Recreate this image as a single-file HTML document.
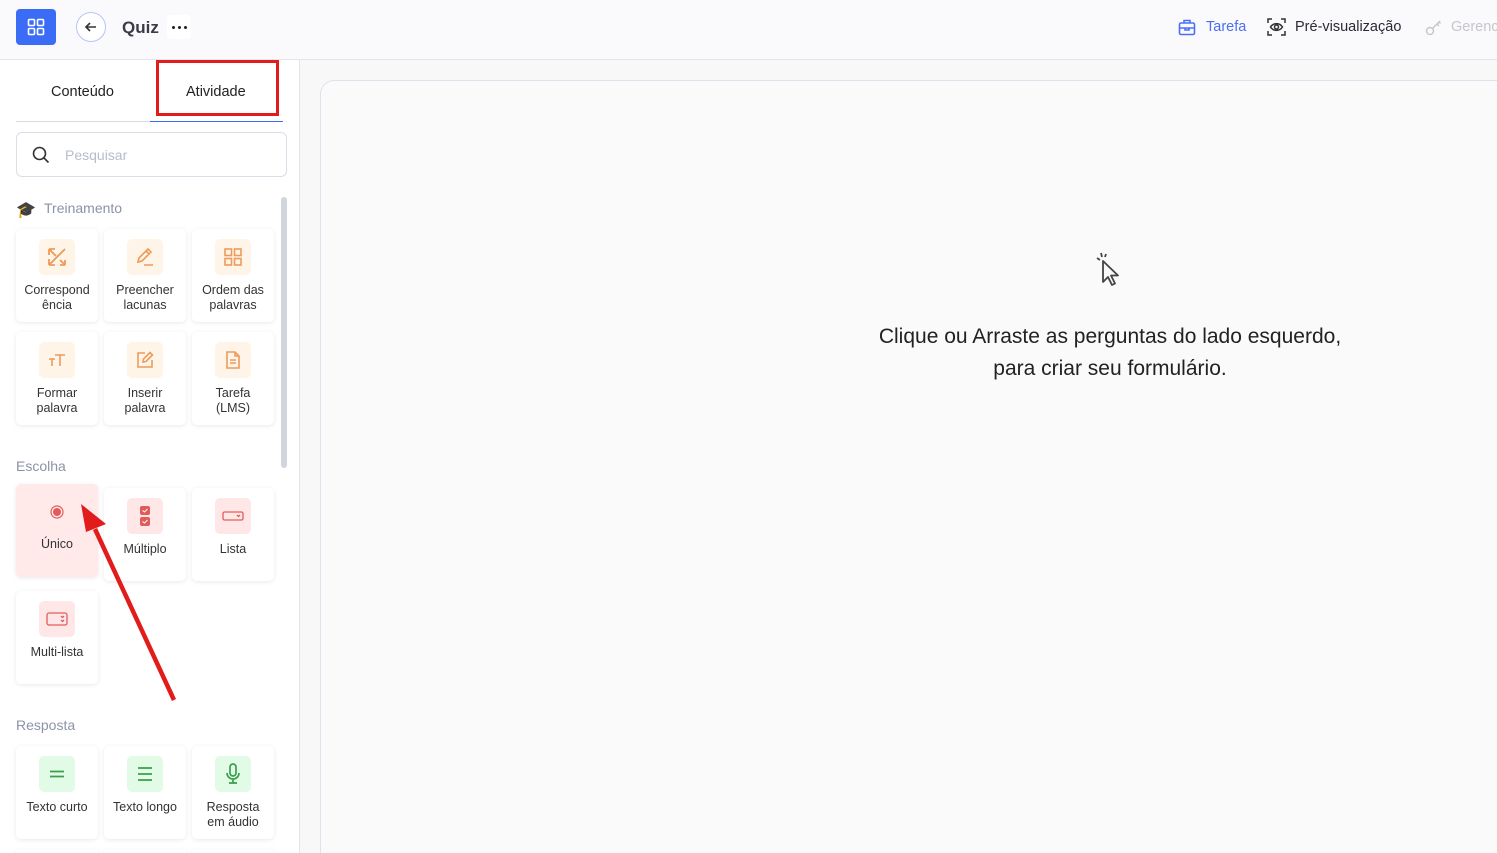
<!DOCTYPE html>
<html style="width:1497px;height:853px;overflow:hidden"><head><meta charset="utf-8"><style>
*{box-sizing:border-box;margin:0;padding:0}
body{width:1497px;height:853px;overflow:hidden;font-family:"Liberation Sans",sans-serif;background:#f8f8f9;position:relative;color:#333}
.hdr{position:absolute;left:0;top:0;width:1497px;height:60px;background:#fafafd;border-bottom:1px solid #e4e3ee}
.side{position:absolute;left:0;top:60px;width:300px;height:793px;background:#fff;border-right:1px solid #e4e3ee}
.panel{position:absolute;left:320px;top:80px;width:1177px;height:773px;background:#fafafa;border:1px solid #e2e0ec;border-right:none;border-bottom:none;border-radius:14px 0 0 0}
.abs{position:absolute}
.card{position:absolute;width:82px;height:93px;background:#fff;border-radius:5px;box-shadow:0 1px 4px rgba(30,40,80,.10);text-align:center;font-size:12.5px;color:#333;line-height:15px}
.ib{width:36px;height:36px;border-radius:5px;margin:10px auto 0;display:flex;align-items:center;justify-content:center}
.o{background:#fff4e8}.r{background:#ffe7e7}.g{background:#e2fbe6}
.lbl{margin-top:8px}
.sec{position:absolute;left:16px;font-size:14px;color:#8b93a6}
</style></head><body>
<div class="hdr">
 <div class="abs" style="left:16px;top:9px;width:40px;height:36px;background:#3b6cf6;border-radius:4px;display:flex;align-items:center;justify-content:center">
  <svg width="18" height="18" viewBox="0 0 18 18" fill="none" stroke="#fff" stroke-width="1.6"><rect x="1.5" y="1.5" width="6" height="6" rx="1"/><rect x="10.5" y="1.5" width="6" height="6" rx="1"/><rect x="1.5" y="10.5" width="6" height="6" rx="1"/><rect x="10.5" y="10.5" width="6" height="6" rx="1"/></svg></div>
 <div class="abs" style="left:76px;top:12px;width:30px;height:30px;border:1px solid #b8c4f4;border-radius:50%;background:#fff;display:flex;align-items:center;justify-content:center">
  <svg width="14" height="14" viewBox="0 0 14 14" fill="none" stroke="#333" stroke-width="1.6"><path d="M12 7H2M6 3L2 7l4 4"/></svg></div>
 <div class="abs" style="left:122px;top:18px;font-size:17px;font-weight:bold;color:#3a3a48">Quiz</div>
 <div class="abs" style="left:167px;top:15px;width:24px;height:24px;background:#fff;border-radius:4px;display:flex;align-items:center;justify-content:center;gap:3px">
  <i style="width:3px;height:3px;background:#222;border-radius:50%"></i><i style="width:3px;height:3px;background:#222;border-radius:50%"></i><i style="width:3px;height:3px;background:#222;border-radius:50%"></i></div>
 <svg class="abs" style="left:1178px;top:19px" width="18" height="17" viewBox="0 0 18 17" fill="none" stroke="#4b6ef5" stroke-width="1.6"><rect x="1.5" y="4" width="15" height="11.5" rx="1.5"/><path d="M6 4V1.5h6V4M1.5 9h15M7 9v2h4V9"/></svg>
 <div class="abs" style="left:1206px;top:19px;font-size:14.5px;color:#4b6ef5">Tarefa</div>
 <svg class="abs" style="left:1267px;top:18px" width="19" height="18" viewBox="0 0 19 18" fill="none" stroke="#333" stroke-width="1.5"><path d="M1 5V1h4M14 1h4v4M18 13v4h-4M5 17H1v-4"/><path d="M3.5 9c3-4.5 9-4.5 12 0c-3 4.5-9 4.5-12 0z"/><circle cx="9.5" cy="9" r="2"/></svg>
 <div class="abs" style="left:1295px;top:19px;font-size:14.5px;color:#2a2a33">Pré-visualização</div>
 <svg class="abs" style="left:1425px;top:19px" width="17" height="17" viewBox="0 0 17 17" fill="none" stroke="#c6c6cc" stroke-width="1.5"><circle cx="5" cy="12" r="3.5"/><path d="M7.5 9.5L15 2M12 5l2 2M14 3l1.5 1.5"/></svg>
 <div class="abs" style="left:1451px;top:19px;font-size:14.5px;color:#c6c6cc;white-space:nowrap">Gerenciar</div>
</div>

<div class="side">
 <div class="abs" style="left:51px;top:24px;font-size:14.5px;color:#222">Conteúdo</div>
 <div class="abs" style="left:186px;top:24px;font-size:14.5px;color:#222">Atividade</div>
 <div class="abs" style="left:16px;top:61px;width:134px;height:1px;background:#d8d8e0"></div>
 <div class="abs" style="left:150px;top:61px;width:133px;height:1px;background:#3b6cf6"></div>
 <div class="abs" style="left:16px;top:72px;width:271px;height:45px;border:1px solid #dcdde6;border-radius:6px">
  <svg class="abs" style="left:15px;top:13px" width="18" height="18" viewBox="0 0 18 18" fill="none" stroke="#333" stroke-width="1.6"><circle cx="7.5" cy="7.5" r="6"/><path d="M12 12l4.5 4.5"/></svg>
  <div class="abs" style="left:48px;top:14px;font-size:14px;color:#b8bccb">Pesquisar</div>
 </div>
 <div class="abs" style="left:281px;top:137px;width:6px;height:271px;background:#d0d5de;border-radius:3px"></div>
</div>

<div class="abs" style="left:16px;top:200px;font-size:16px">🎓</div>
<div class="sec" style="left:44px;top:200px">Treinamento</div>

<div class="card" style="left:16px;top:229px"><div class="ib o"><svg width="22" height="22" viewBox="0 0 22 22" fill="none" stroke="#ee9a5a" stroke-width="1.8"><path d="M3 3l7 7M3 3v6M3 3h6M19 3L3 19M3 19v-6M3 19h6M14 14l5 5M19 19v-5M19 19h-5"/></svg></div><div class="lbl">Correspond<br>ência</div></div>
<div class="card" style="left:104px;top:229px"><div class="ib o"><svg width="20" height="20" viewBox="0 0 20 20" fill="none" stroke="#ee9a5a" stroke-width="1.6"><path d="M3 15l1-4L13 2l3 3-9 9-4 1zM11 4l3 3M9 18h9"/></svg></div><div class="lbl">Preencher<br>lacunas</div></div>
<div class="card" style="left:192px;top:229px"><div class="ib o"><svg width="20" height="20" viewBox="0 0 20 20" fill="none" stroke="#ee9a5a" stroke-width="1.6"><rect x="2" y="2" width="6.5" height="6.5"/><rect x="11.5" y="2" width="6.5" height="6.5"/><rect x="2" y="11.5" width="6.5" height="6.5"/><rect x="11.5" y="11.5" width="6.5" height="6.5"/></svg></div><div class="lbl">Ordem das<br>palavras</div></div>

<div class="card" style="left:16px;top:332px"><div class="ib o"><svg width="20" height="20" viewBox="0 0 20 20" fill="none" stroke="#ee9a5a" stroke-width="1.6"><path d="M8 5h10M13 5v11M2 9h6M5 9v7"/></svg></div><div class="lbl">Formar<br>palavra</div></div>
<div class="card" style="left:104px;top:332px"><div class="ib o"><svg width="20" height="20" viewBox="0 0 20 20" fill="none" stroke="#ee9a5a" stroke-width="1.6"><path d="M10 3H3v14h14v-7"/><path d="M8 12l.5-3L15 2.5l2.5 2.5L11 11.5z"/></svg></div><div class="lbl">Inserir<br>palavra</div></div>
<div class="card" style="left:192px;top:332px"><div class="ib o"><svg width="20" height="20" viewBox="0 0 20 20" fill="none" stroke="#ee9a5a" stroke-width="1.6"><path d="M4 2h8l4 4v12H4zM12 2v4h4M7 10h6M7 13h6"/></svg></div><div class="lbl">Tarefa<br>(LMS)</div></div>

<div class="sec" style="top:458px">Escolha</div>
<div class="card" style="left:16px;top:484px;background:#ffe9e9"><div class="ib"><svg width="16" height="16" viewBox="0 0 16 16"><circle cx="8" cy="8" r="6" fill="none" stroke="#e25b5b" stroke-width="1.2"/><circle cx="8" cy="8" r="4" fill="#e25b5b"/></svg></div><div style="margin-top:7px">Único</div></div>
<div class="card" style="left:104px;top:488px"><div class="ib r"><svg width="12" height="22" viewBox="0 0 12 22"><rect x="1" y="1" width="10" height="9" rx="2" fill="#e25b5b"/><rect x="1" y="12" width="10" height="9" rx="2" fill="#e25b5b"/><path d="M3.5 5.5l2 1.5 3-3M3.5 16.5l2 1.5 3-3" stroke="#fff" fill="none" stroke-width="1"/></svg></div><div class="lbl">Múltiplo</div></div>
<div class="card" style="left:192px;top:488px"><div class="ib r"><svg width="22" height="12" viewBox="0 0 22 12" fill="none" stroke="#e25b5b" stroke-width="1.3"><rect x="1" y="2" width="20" height="8" rx="1.5"/><path d="M15 5l1.5 1.5L18 5"/></svg></div><div class="lbl">Lista</div></div>
<div class="card" style="left:16px;top:591px"><div class="ib r"><svg width="22" height="16" viewBox="0 0 22 16" fill="none" stroke="#e25b5b" stroke-width="1.3"><rect x="1" y="2" width="20" height="12" rx="2"/><path d="M15 5l1.5 1.5L18 5M15 9l1.5 1.5L18 9"/></svg></div><div class="lbl">Multi-lista</div></div>

<div class="sec" style="top:717px">Resposta</div>
<div class="card" style="left:16px;top:746px"><div class="ib g"><svg width="18" height="18" viewBox="0 0 18 18" stroke="#3aa04a" stroke-width="1.8"><path d="M2 6.5h14M2 11.5h14"/></svg></div><div class="lbl">Texto curto</div></div>
<div class="card" style="left:104px;top:746px"><div class="ib g"><svg width="18" height="18" viewBox="0 0 18 18" stroke="#3aa04a" stroke-width="1.8"><path d="M2 3h14M2 9h14M2 15h14"/></svg></div><div class="lbl">Texto longo</div></div>
<div class="card" style="left:192px;top:746px"><div class="ib g"><svg width="18" height="22" viewBox="0 0 18 22" fill="none" stroke="#3aa04a" stroke-width="1.7"><rect x="6" y="1" width="6" height="12" rx="3"/><path d="M3 10a6 6 0 0 0 12 0M9 16v4M5 20h8"/></svg></div><div class="lbl">Resposta<br>em áudio</div></div>
<div class="card" style="left:16px;top:850px;height:3px"></div><div class="card" style="left:104px;top:850px;height:3px"></div><div class="card" style="left:192px;top:850px;height:3px"></div>

<div class="panel"></div>
<svg class="abs" style="left:1092px;top:250px" width="32" height="42" viewBox="0 0 32 42" fill="none" stroke="#444" stroke-width="1.8"><path d="M11 11l0 21 5-5 4 8 3-1.5-4-8h7z" stroke-linejoin="round"/><path d="M5 8l3 2M9 3l1 4M14 4l-1 3"/></svg>
<div class="abs" style="left:810px;top:321px;width:600px;text-align:center;font-size:21px;line-height:32px;color:#222">Clique ou Arraste as perguntas do lado esquerdo,<br>para criar seu formulário.</div>

<div class="abs" style="left:156px;top:60px;width:123px;height:56px;border:3.5px solid #e21b1b"></div>
<svg class="abs" style="left:0;top:0" width="300" height="853"><path d="M174 700L95 529" stroke="#e21b1b" stroke-width="4.5"/><path d="M81 504l25 20-20 8z" fill="#e21b1b"/></svg>
</body></html>
